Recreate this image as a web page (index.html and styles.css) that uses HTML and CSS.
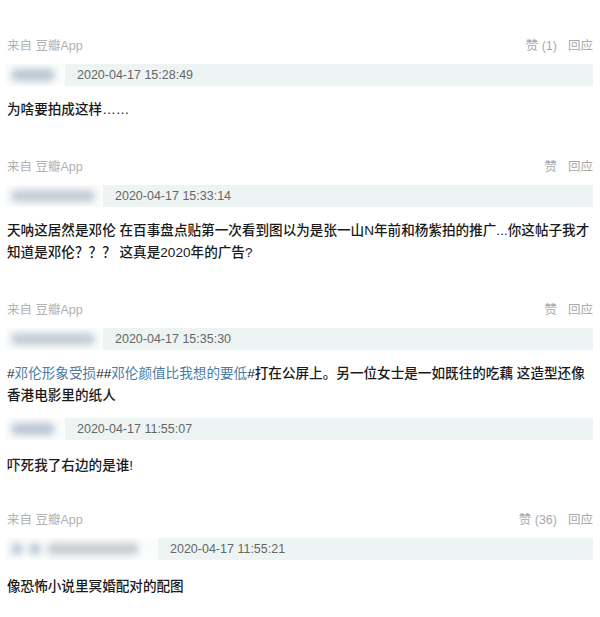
FILE: index.html
```html
<!DOCTYPE html>
<html lang="zh-CN">
<head>
<meta charset="utf-8">
<title>回应</title>
<link rel="stylesheet" href="styles.css">
</head>
<body>
<div class="page">
  <div class="comment first">
    <div class="meta"><span class="src">来自 豆瓣App</span><span class="acts"><span class="like">赞 (1)</span><span class="reply">回应</span></span></div>
    <div class="bar"><span class="av av-s"><i class="b b1"></i></span><span class="date">2020-04-17 15:28:49</span></div>
    <p class="text">为啥要拍成这样……</p>
  </div>

  <div class="comment">
    <div class="meta"><span class="src">来自 豆瓣App</span><span class="acts"><span class="like">赞</span><span class="reply">回应</span></span></div>
    <div class="bar"><span class="av av-m"><i class="b b2"></i></span><span class="date">2020-04-17 15:33:14</span></div>
    <p class="text">天呐这居然是邓伦 在百事盘点贴第一次看到图以为是张一山N年前和杨紫拍的推广...你这帖子我才<br>知道是邓伦？？？ 这真是2020年的广告?</p>
  </div>

  <div class="comment">
    <div class="meta"><span class="src">来自 豆瓣App</span><span class="acts"><span class="like">赞</span><span class="reply">回应</span></span></div>
    <div class="bar"><span class="av av-m"><i class="b b2"></i></span><span class="date">2020-04-17 15:35:30</span></div>
    <p class="text">#<a class="tag">邓伦形象受损</a>##<a class="tag">邓伦颜值比我想的要低</a>#打在公屏上。另一位女士是一如既往的吃藕 这造型还像<br>香港电影里的纸人</p>
  </div>

  <div class="comment plain">
    <div class="bar"><span class="av av-s"><i class="b b1"></i></span><span class="date">2020-04-17 11:55:07</span></div>
    <p class="text">吓死我了右边的是谁!</p>
  </div>

  <div class="comment late">
    <div class="meta"><span class="src">来自 豆瓣App</span><span class="acts"><span class="like">赞 (36)</span><span class="reply">回应</span></span></div>
    <div class="bar"><span class="av av-l"><i class="b b3"></i><i class="b b3"></i><i class="b b4"></i></span><span class="date">2020-04-17 11:55:21</span></div>
    <p class="text">像恐怖小说里冥婚配对的配图</p>
  </div>

  <div class="comment last">
    <div class="meta"><span class="src"></span><span class="acts"><span class="like">赞 (18)</span><span class="reply">回应</span></span></div>
  </div>
</div>
</body>
</html>
```

FILE: styles.css
```css
html, body {
  margin: 0;
  padding: 0;
  background: #ffffff;
}
body {
  height: 617px;
  overflow: hidden;
  font-family: "Liberation Sans", "Noto Sans CJK SC", sans-serif;
}
.page {
  padding: 38px 7px 0 5px;
}
.comment {
  margin-bottom: 38px;
}
.comment.plain {
  margin-top: -27px;
  margin-bottom: 35px;
}
.comment.last {
  margin-top: -18px;
}
.meta {
  display: flex;
  justify-content: space-between;
  align-items: center;
  height: 16px;
  line-height: 16px;
  font-size: 12.5px;
  padding-left: 2px;
  color: #b2b2b2;
}
.acts {
  display: flex;
  gap: 11px;
  color: #a9a9a9;
}
.bar {
  display: flex;
  align-items: center;
  height: 22px;
  margin-top: 10px;
  background: #eef4f3;
}
.av {
  display: flex;
  align-items: center;
  gap: 6px;
  height: 100%;
  background: #fbfcfc;
  overflow: hidden;
  padding: 0 6px;
  box-sizing: border-box;
}
.av-s { width: 60px; }
.av-m { width: 98px; }
.av-l { width: 153px; }
.b {
  display: block;
  height: 12px;
  border-radius: 6px;
  filter: blur(3.5px);
}
.b1 { width: 44px; background: #b9c7d4; }
.b2 { width: 84px; background: #c3ccd5; }
.b3 { width: 12px; background: #b8c8da; }
.b4 { width: 92px; background: #c9cccf; }
.date {
  margin-left: 12px;
  font-size: 12.5px;
  color: #666666;
}
.text {
  margin: 13px 0 0 2px;
  font-size: 13.6px;
  font-weight: 500;
  line-height: 22px;
  color: #1a1a1a;
  white-space: nowrap;
}
.plain .text {
  margin-top: 15px;
}
.late .text {
  margin-top: 16px;
}
.tag {
  color: #4a7ba6;
  font-weight: 400;
}
```
